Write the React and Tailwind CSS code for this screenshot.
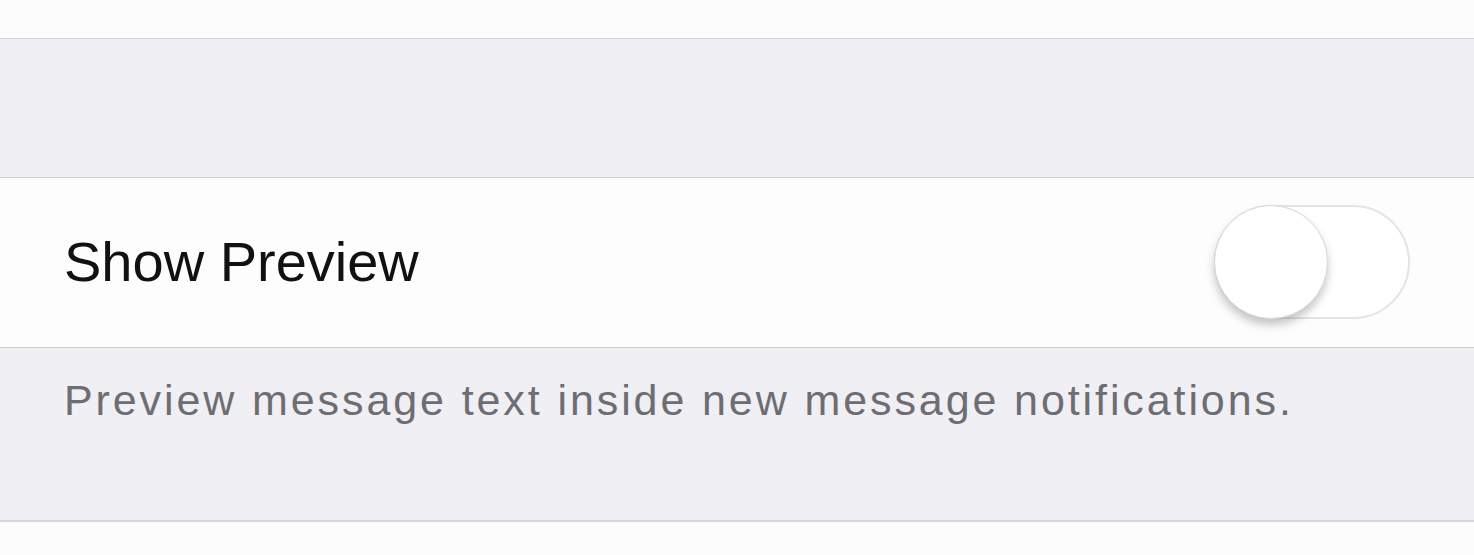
export default function App() {
  return (
    <div className="w-[1474px] h-[555px] overflow-hidden bg-[#efeff4] font-['Liberation_Sans',Arial,sans-serif]">
      <div className="h-[39px] bg-[#fcfcfd] border-b border-[#d2d2d6]" />
      <div className="h-[139px] bg-[#efeff4] border-b border-[#cfcfd3]" />
      <div className="h-[170px] bg-[#fdfdfd] border-b border-[#cfcfd3] flex items-center justify-between pl-[64px] pr-[64px]">
        <span className="text-[56px] leading-none text-[#111111] -mt-[2px]">Show Preview</span>
        <Toggle />
      </div>
      <div className="h-[174px] bg-[#efeff4] border-b-2 border-[#d6d6da] pl-[64px] pt-[28px]">
        <p className="text-[43px] leading-[48px] tracking-[2.9px] text-[#6d6d72]">
          Preview message text inside new message notifications.
        </p>
      </div>
      <div className="h-[40px] bg-[#fcfcfd]" />
    </div>
  );
}

function Toggle() {
  return (
    <div className="relative w-[196px] h-[114px] rounded-full border-2 border-[#e4e4e6] bg-white mt-[-2px]">
      <div className="absolute left-[-2px] top-[-2px] w-[114px] h-[114px] rounded-full bg-white border border-[#d8d8da] shadow-[0_6px_8px_rgba(0,0,0,0.22)]" />
    </div>
  );
}
